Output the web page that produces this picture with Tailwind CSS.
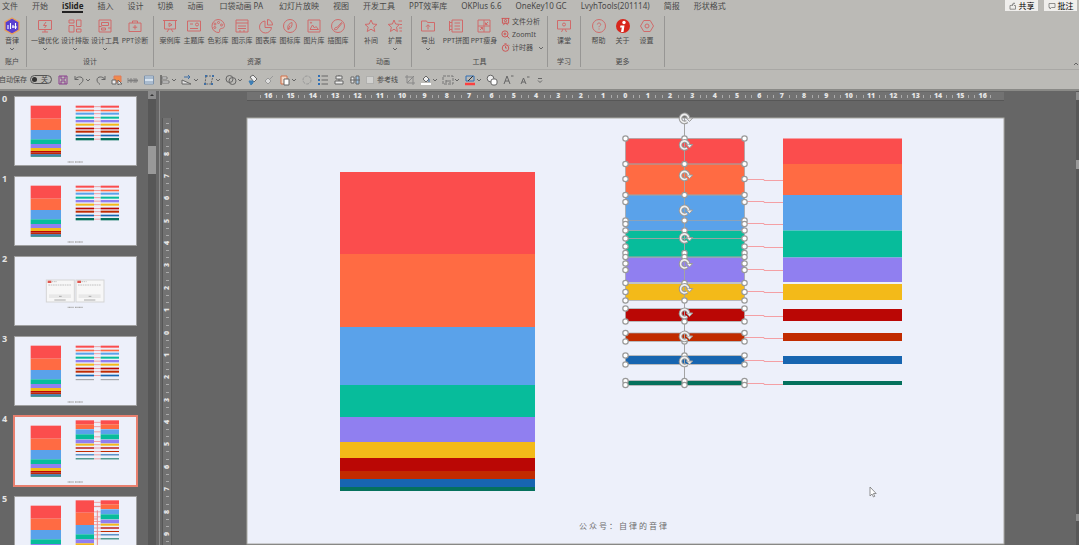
<!DOCTYPE html>
<html lang="zh-CN">
<head>
    <meta charset="UTF-8" />
    <meta name="viewport" content="width=device-width, initial-scale=1.0" />
    <title>iSlide - PowerPoint</title>
    <script src="https://cdn.jsdelivr.net/npm/@tailwindcss/browser@4"></script>
</head>
<body class="h-screen overflow-hidden flex flex-col bg-[#666666] text-[#484848] font-['Noto_Sans','Noto_Sans_CJK_SC',sans-serif]">

    <!-- Icon sprite -->
    <svg class="hidden">
        <defs>
            <symbol id="i-optimize" viewBox="0 0 16 16"><path d="M1.5 2.5h13v9h-13zM5 14h6M8 11.5V14"/><path d="M9 4 6.500 7.500h3L7.500 10" fill="none"/></symbol>
            <symbol id="i-layout" viewBox="0 0 16 16"><path d="M2 2h5v3H2zM2 7.500h5V14H2zM9.500 2H14v6.500H9.500zM9.500 11H14v3H9.500z"/></symbol>
            <symbol id="i-design" viewBox="0 0 16 16"><path d="M2 2h12v12H2zM4.500 4.500h7v3h-7zM4.500 10h4v2h-4zM2 8.500h2.500M11 10h3"/></symbol>
            <symbol id="i-diagnose" viewBox="0 0 16 16"><path d="M2 5h12v8.500H2zM5.500 5V3h5v2M8 7v4.500M5.800 9.200h4.400"/></symbol>
            <symbol id="i-case" viewBox="0 0 16 16"><path d="M1 2.500h14M2.500 2.500v8.500h11V2.500M5 14l2-3M11 14l-2-3M7 5v3.500l3-1.700z"/></symbol>
            <symbol id="i-theme" viewBox="0 0 16 16"><path d="M1.500 3h13v10h-13zM4 6h3M4 10.500h8"/><circle cx="11" cy="6.500" r="1.500"/></symbol>
            <symbol id="i-color" viewBox="0 0 16 16"><path d="M8 1.500a6.500 6.500 0 1 0 1 13c1.500-.5 0-2.500 1-3.500 1-1 4.500 0 4.500-3.500A6.500 6.500 0 0 0 8 1.500z"/><circle cx="5" cy="6" r="1"/><circle cx="8.500" cy="4.500" r="1"/><circle cx="11.500" cy="7" r="1"/><circle cx="4.800" cy="9.500" r="1"/></symbol>
            <symbol id="i-diagram" viewBox="0 0 16 16"><path d="M2 2h12v12H2zM2 5h12M4 8h8M4 10.500h8M6 14v-2M10 14v-2"/></symbol>
            <symbol id="i-chart" viewBox="0 0 16 16"><path d="M7 3a6 6 0 1 0 6.500 6.500H7z"/><path d="M9.500 1.500v5.500h5a5.500 5.500 0 0 0-5-5.500z"/></symbol>
            <symbol id="i-iconlib" viewBox="0 0 16 16"><circle cx="8" cy="8" r="6.500"/><path d="M6 11.500c-1-3 .5-6 4-7 .5 3.500-1 6-4 7zM6 11.500l2-4"/></symbol>
            <symbol id="i-picture" viewBox="0 0 16 16"><path d="M2 2h12v12H2zM4 11.500 6.500 7l2 3 1.500-1.500 2.500 3z"/><circle cx="5" cy="4.700" r=".6"/></symbol>
            <symbol id="i-vector" viewBox="0 0 16 16"><circle cx="8" cy="8" r="6.500"/><path d="M4.500 11.500c0-2 1.500-2.500 2.500-2l4.500-5 .5.800-4.300 5c0 1-1.500 1.700-3.200 1.200z"/></symbol>
            <symbol id="i-star" viewBox="0 0 16 16"><path d="m8 2 1.800 4 4.200.4-3.200 2.800 1 4.300L8 11.200l-3.800 2.300 1-4.300L2 6.400 6.200 6z"/></symbol>
            <symbol id="i-extend" viewBox="0 0 16 16"><path d="m7 2 1.600 4 3.900.4-3 2.800.9 4.300L7 11.200l-3.600 2.300 1-4.300-3.200-2.800L5.400 6zM11.500 3h3.500M13 6.500h2M12 10h3M12.500 13H15"/></symbol>
            <symbol id="i-export" viewBox="0 0 16 16"><path d="M1.500 3h5l1 1.500h7V13h-13zM8 11.500V7M6 8.800 8 6.700l2 2.100"/></symbol>
            <symbol id="i-stitch" viewBox="0 0 16 16"><path d="M4 2h10.500v12H4zM1.500 4.500H4M1.500 8H4M1.500 11.500H4M1.500 3v10M6.500 5h5.500M6.500 8h5.500M6.500 11h5.500"/></symbol>
            <symbol id="i-slim" viewBox="0 0 16 16"><path d="M2 2h12v12H2zM8 2v12M2 8h12M12 4 9.500 6.500V4.500M9.500 6.500h2M4 12l2.500-2.500v2M6.500 9.500h-2"/></symbol>
            <symbol id="i-analyze" viewBox="0 0 16 16"><path d="M1 2.500h14M2.500 2.500v8.500h11V2.500M4 14.500l3-3.500M12 14.500 9 11"/><circle cx="8" cy="6.500" r="2"/></symbol>
            <symbol id="i-zoomit" viewBox="0 0 16 16"><circle cx="7" cy="7" r="5.500"/><path d="m11 11 4 4M7 4.500v5M4.500 7h5"/></symbol>
            <symbol id="i-timer" viewBox="0 0 16 16"><circle cx="8" cy="9" r="5.800"/><path d="M6 1.500h4M8 5.500V9h2.500M13 3l1.500 1.500"/></symbol>
            <symbol id="i-class" viewBox="0 0 16 16"><path d="M1.500 2.500h13V11h-13zM5.500 14 7 11M10.500 14 9 11"/><circle cx="8" cy="6.500" r="1.500"/></symbol>
            <symbol id="i-help" viewBox="0 0 16 16"><circle cx="8" cy="8" r="6.500"/><path d="M6.300 6.500C6.300 4.500 9.700 4.500 9.700 6.500 9.700 7.700 8 7.700 8 9.200M8 10.500v1"/></symbol>
            <symbol id="i-setting" viewBox="0 0 16 16"><path d="M4.800 2.500h6.400L14.500 8l-3.300 5.500H4.800L1.500 8z"/><circle cx="8" cy="8" r="2"/></symbol>
            <symbol id="i-chev" viewBox="0 0 6 6"><path d="m1 2 2 2 2-2" fill="none" stroke="#666" stroke-width="1"/></symbol>
        </defs>
    </svg>

    <!-- Ribbon -->
    <header class="shrink-0 bg-[#bbbab6] border-b-2 border-[#8a8a87]">
        <div class="flex items-start justify-between h-[15px]">
            <nav class="flex gap-[14px] pl-[2px] text-[8px] leading-[11px] whitespace-nowrap">
                <a href="#">文件</a>
                <a href="#">开始</a>
                <a href="#" class="font-bold text-[#222] border-b-2 border-[#222]">iSlide</a>
                <a href="#">插入</a>
                <a href="#">设计</a>
                <a href="#">切换</a>
                <a href="#">动画</a>
                <a href="#" class="px-[2px]">口袋动画 PA</a>
                <a href="#">幻灯片放映</a>
                <a href="#">视图</a>
                <a href="#">开发工具</a>
                <a href="#">PPT效率库</a>
                <a href="#">OKPlus 6.6</a>
                <a href="#">OneKey10 GC</a>
                <a href="#">LvyhTools(201114)</a>
                <a href="#">简报</a>
                <a href="#">形状格式</a>
            </nav>
            <div class="flex gap-[6px] pr-[2px] text-[8px] leading-[11px] text-black">
                <button class="flex items-center justify-center gap-[2px] w-[33px] h-[11px] bg-[#efeeec]">
                    <svg class="size-[8px]" viewBox="0 0 8 8" fill="none" stroke="#777" stroke-width=".8"><path d="M2.500 3.500H1v3.700h5.500V3.500H5M2.500 3.500l2.500-3M3.500 4c0-2 1-2.500 2.500-2.500"/></svg>共享
                </button>
                <button class="flex items-center justify-center gap-[2px] w-[33px] h-[11px] bg-[#efeeec]">
                    <svg class="size-[8px]" viewBox="0 0 8 8" fill="none" stroke="#777" stroke-width=".8"><path d="M1 1.500h6v4H3.500L2 7V5.500H1z"/></svg>批注
                </button>
            </div>
        </div>

        <div class="relative flex h-[55px] pt-[1px] pb-[2px] border-b border-[#a9a8a5] text-[7px] leading-[10px] whitespace-nowrap" id="ribbon">
            <button class="absolute right-0 bottom-[2px]" aria-label="折叠功能区"><svg class="size-[6px] rotate-180"><use href="#i-chev"/></svg></button>
        </div>

        <!-- Quick access toolbar -->
        <div class="flex items-center h-[19px] text-[7px] leading-[10px] whitespace-nowrap">
            <label for="autosave" class="w-[28px] -ml-px">自动保存</label>
            <div class="relative w-[28px] pl-[3px]">
                <input id="autosave" type="checkbox" class="block appearance-none w-[22px] h-[9px] rounded-full border border-[#555]" />
                <span class="absolute left-[5px] top-[2px] size-[5px] rounded-full bg-[#333]"></span>
                <span class="absolute left-[14px] top-0 leading-[9px]">关</span>
            </div>
            <div class="flex" id="qat-a"></div>
            <label class="flex items-center gap-[3px] w-[39px] pl-[3px]"><input type="checkbox" class="appearance-none size-[8px] bg-[#d2d2d0] border border-[#b0b0ae]" />参考线</label>
            <div class="flex" id="qat-b"></div>
        </div>
    </header>

    <main class="flex flex-1 min-h-0">
        <!-- Slide list -->
        <aside class="flex w-[160px] shrink-0 border-r border-[#8c8c8c]">
            <ol class="flex-1 pl-[2px] pt-[6px] overflow-hidden" id="thumbs"></ol>
            <div class="w-[8px] mr-[3px] bg-[#575757]">
                <button class="block w-[8px] h-[8px] bg-[#8d8d8d]" aria-label="向上滚动"><svg class="size-[8px]" viewBox="0 0 8 8"><path d="M2 5h4L4 3z" fill="#333"/></svg></button>
                <div class="mt-[47px] h-[28px] bg-[#999999]"></div>
            </div>
        </aside>

        <div class="w-[10px] ml-[2px] mt-[27px] bg-[#727272] border-x border-[#575757] flex flex-col pt-[2px] text-[7px] font-bold text-[#e4e4e4]" id="vruler"></div>

        <!-- Editing area -->
        <section class="flex-1 min-w-0 pl-[75px] pr-[72px]">
            <div class="flex mt-[1px] h-[9px] px-[10px] bg-[#727272] border-b border-[#575757] text-[7px] leading-[8px] font-bold text-[#e4e4e4]" id="hruler"></div>
            <svg id="slide" class="block w-full mt-[17px] overflow-visible" viewBox="247 118 757 426">
                <rect x="247" y="118" width="757" height="426" fill="#edf0fa" stroke="#a9a9a4" stroke-width="1"/>
                <g id="shapes"></g>
                <g id="connectors" fill="none" stroke="#f4a0a4" stroke-width="1"></g>
                <g id="selection" fill="none" stroke="#a3a3a3"></g>
                <text x="579" y="529" class="text-[8px] tracking-[2px]" fill="#6c6c6c">公众号：自律的音律</text>
                <path d="M870 487v9l2-2 1.500 3 1.300-.7-1.400-2.800h2.800z" fill="#fff" stroke="#777" stroke-width=".8"/>
            </svg>
        </section>

        <div class="w-[3px] bg-[#575757] pt-[1px]">
            <div class="h-[8px] bg-[#8d8d8d]"></div>
            <div class="mt-[60px] h-[9px] bg-[#999999]"></div>
            <div class="mt-[345px] h-[7px] bg-[#8d8d8d]"></div>
        </div>
    </main>

    <script>
        const $ = id => document.getElementById(id);
        const colors = ['#fb4d4d', '#ff6b43', '#5aa2ea', '#07bc9b', '#907ff0', '#f3ba19', '#ba0705', '#c12b00', '#1765b0', '#05715c'];
        const chev = '<svg class="size-[6px]"><use href="#i-chev"/></svg>';

        // Ribbon groups: [name, group classes, item width, items [label, icon, has menu]]
        const logo = '<svg class="size-[18px] -my-px" viewBox="0 0 18 18"><path d="m9 1 7 4v8l-7 4-7-4V5z" fill="#5a3fd0" stroke="#e8a05a" stroke-width="1.300"/><path d="M5 8v4M7.500 6v6M10 8v3M12.500 6v6M9 10h5" stroke="#fff" stroke-width="1.100"/></svg>';
        const about = '<svg class="size-[16px]" viewBox="0 0 16 16"><circle cx="8" cy="8" r="7" fill="#d8261c"/><circle cx="9" cy="4.500" r="1.700" fill="#fff"/><path d="M5.500 7.500h4L8.500 14H6l.8-4.500H5z" fill="#fff"/></svg>';
        const groups = [
            ['账户', 'w-[29px] -ml-[2px]', 'w-[26px]', [['音律', logo, 1]]],
            ['设计', 'w-[127px]', 'w-[30px]', [['一键优化', 'optimize', 1], ['设计排版', 'layout', 1], ['设计工具', 'design', 1], ['PPT诊断', 'diagnose']]],
            ['资源', 'w-[201px]', 'w-[24px]', [['案例库', 'case'], ['主题库', 'theme'], ['色彩库', 'color'], ['图示库', 'diagram'], ['图表库', 'chart'], ['图标库', 'iconlib'], ['图片库', 'picture'], ['插图库', 'vector']]],
            ['动画', 'w-[57px]', 'w-[24px]', [['补间', 'star'], ['扩展', 'extend', 1]]],
            ['工具', 'w-[136px]', 'w-[28px]', [['导出', 'export', 1], ['PPT拼图', 'stitch'], ['PPT瘦身', 'slim']]],
            ['学习', 'w-[33px]', 'w-[24px]', [['课堂', 'class']]],
            ['更多', 'w-[84px]', 'w-[24px]', [['帮助', 'help'], ['关于', about], ['设置', 'setting']]]
        ];
        const icon = n => n[0] === '<' ? n : `<svg class="size-[16px]" fill="none" stroke="#d06a6a" stroke-width="1"><use href="#i-${n}"/></svg>`;
        const tools = [['文件分析', 'analyze', ''], ['ZoomIt', 'zoomit', ''], ['计时器', 'timer', chev]].map(t =>
            `<button class="flex items-center gap-[2px] h-[13px]"><svg class="size-[9px]" fill="none" stroke="#d04848" stroke-width="1.500"><use href="#i-${t[1]}"/></svg>${t[0]}<span class="pl-[3px]">${t[2]}</span></button>`).join('');
        $('ribbon').insertAdjacentHTML('afterbegin', groups.map(([name, cls, w, items]) => `
            <div class="${cls} shrink-0 flex flex-col justify-between border-r border-[#979694]">
                <div class="flex justify-center pt-[2px]">
                    ${items.map(([label, ic, menu]) => `<button class="${w} flex flex-col items-center">${icon(ic)}<span class="mt-[2px]">${label}</span>${menu ? chev : ''}</button>`).join('')}
                    ${name === '工具' ? `<div class="w-[44px] ml-[3px] -mt-[3px]">${tools}</div>` : ''}
                </div>
                <div class="-mt-[4px] text-center">${name}</div>
            </div>`).join(''));

        // Quick access icons: [label, drawing, has menu]
        const qatA = [
            ['保存', '<path d="M2 2h8v8H2z" stroke="#8a3f8e"/><path d="M4 2v3h4V2M4 10V7h4v3" stroke="#8a3f8e"/>'],
            ['撤销', '<path d="M2 2v3.500h3.500M2 5.500C4 2 10 2 10 6c0 2-2 3-4 5"/>', 1],
            ['恢复', '<path d="M10 2v3.500H6.500M10 5.500C8 2 2 2 2 6c0 2 1.500 3 3 4.500"/>'],
            ['选择', '<path d="M3 2h7v6H3z" fill="#f08a4a" stroke="#e07a5a"/><path d="M1 6h4v4H1z" fill="#eee"/><path d="m7 6 4 4H8l-1 1z" fill="#fff"/>'],
            ['对齐', '<path d="M1 4v5M3 5h2v3H3zM7 4v5M8 5h2v3H8zM1 6.500h10" stroke="#777" stroke-width=".8"/>'],
            ['等宽', '<path d="M1.500 2h9v8h-9z" fill="#d7e3ef" stroke="#7d93ad"/><path d="M1.500 4h9M1.500 8h9" stroke="#7d93ad"/>'],
            ['左对齐', '<path d="M2 1v10" stroke="#333"/><path d="M3 3h5v2H3zM3 7h7v2H3z" fill="#e4e4e4" stroke-width=".8"/>', 1],
            ['旋转', '<path d="M1 10h9L1 6z" fill="#e4e4e4"/><path d="M3 3h6M7 1l2 2-2 2" stroke="#3f6fa5"/>', 1],
            ['编辑顶点', '<path d="M3 2h7L8 10H2z" stroke-dasharray="2 1"/><path d="M2 1h2v2H2zM9 1h2v2H9zM1 9h2v2H1zM8 9h2v2H8z" fill="#3f6fa5" stroke="none"/>', 1],
            ['合并形状', '<circle cx="4.500" cy="5" r="3.500"/><circle cx="7.500" cy="7" r="3.500"/>', 1],
            ['取色', '<path d="m3 3 3-2 4 4-3 3z" fill="#eee"/><path d="M2 7h4v2l-2 2z" fill="#3f7fb5" stroke="#3f7fb5"/>'],
            ['格式刷', '<path d="m2 7 3-3 3 3-3 3zM7 5l3-3" stroke="#999" fill="#ddd"/>'],
            ['粘贴', '<path d="M2 2h6v8H2z" fill="#f0d8c8" stroke="#d0704a"/><path d="M5 5h5v6H5z" fill="#fff"/>', 1],
            ['圆', '<circle cx="6" cy="6" r="4" stroke="#999" stroke-dasharray="3 1"/>'],
            ['项目符号', '<path d="M4.500 2H11M4.500 6H11M4.500 10H11"/><path d="M1 1h2v2H1zM1 5h2v2H1zM1 9h2v2H1z" fill="#2f6fb5" stroke="none"/>'],
            ['水平居中', '<path d="M3 2h6v3H3zM2 7h8v3H2zM6 1v1M6 5v2" fill="#eee"/>'],
            ['垂直居中', '<path d="M2 3h3v6H2z" fill="#eee"/><path d="M7 2h3v8H7z" fill="#9cc3e6"/><path d="M1 6h10"/>']
        ];
        const qatB = [
            ['裁剪', '<path d="M3 1v8h8M1 3h8v8M3 9l7-7" stroke="#888"/>'],
            ['填充', '<path d="m3 5 3-3 3 3-3 3z" fill="#eee"/><path d="M9 5v3" stroke="#3f6fa5"/><path d="M1 10h10" stroke="#fff" stroke-width="2"/>', 1],
            ['文本框', '<path d="M1 2h10v8H1zM4 9V5M8 9V5M4 7h4" stroke-dasharray="3 1" stroke="#777"/>', 1],
            ['轮廓', '<path d="M2 2h8v5H2z" stroke="#2f6fb5"/><path d="m4 7 5-5" stroke="#333"/><path d="M1 10h10" stroke="#fb4040" stroke-width="2.500"/>', 1],
            ['叠放', '<circle cx="4.500" cy="4.500" r="3.300" fill="#eee"/><rect x="5" y="5" width="6" height="6" rx="2" fill="#fff"/>'],
            ['增大字号', '<path d="M2 10 5 2l3 8M3 7h4M9 2h2.500"/>'],
            ['减小字号', '<path d="m3 10 2.500-6L8 10M4 8h3M9 3h2.500"/>'],
            ['自定义', '<path d="M4 4.500h4M4 6.500l2 2 2-2"/>']
        ];
        const qat = list => list.map(([label, d, menu]) =>
            `<button aria-label="${label}" class="${menu ? 'w-[22px]' : 'w-[16px]'} flex items-center pl-[2px]"><svg class="size-[12px]" viewBox="0 0 12 12" fill="none" stroke="#666" stroke-width="1">${d}</svg>${menu ? chev : ''}</button>`).join('');
        $('qat-a').innerHTML = qat(qatA);
        $('qat-b').innerHTML = qat(qatB);

        // Rulers
        for (let i = -16; i <= 16; i++) {
            $('hruler').innerHTML += `<span class="flex-1 flex items-center justify-center gap-[3px]"><i class="w-px h-[3px] bg-[#aaaaaa]"></i><b class="w-[9px] text-center">${Math.abs(i)}</b><i class="w-px h-[3px] bg-[#aaaaaa]"></i></span>`;
        }
        for (let i = -9; i <= 9; i++) {
            $('vruler').innerHTML += `<span class="flex-1 flex flex-col items-center justify-center gap-[2px]"><i class="h-px w-[3px] bg-[#aaaaaa]"></i><b class="-rotate-90 w-[10px] text-center leading-[10px]">${Math.abs(i)}</b><i class="h-px w-[3px] bg-[#aaaaaa]"></i></span>`;
        }

        const bar = (x, w, y1, y2, c) => `<rect x="${x}" y="${y1}" width="${w}" height="${y2 - y1}" fill="${c}"/>`;
        const bars = (x, w, list) => list.map(([a, b], i) => bar(x, w, a, b, colors[i])).join('');
        const stack = ys => ys.slice(1).map((y, i) => [ys[i], y]);

        // Thumbnails
        const left = stack([26, 65, 99, 127, 141, 153, 162, 167, 172, 176, 179]);
        const even = [[26, 32], [38, 43], [47, 53], [59, 65], [69, 76], [80, 86], [92, 97], [101, 107], [113, 118], [123, 130]];
        const thin = even.slice(0, 9);
        const packed = [[10, 22], [22, 36], [37, 52], [52, 67], [68, 79], [80, 86], [91, 95], [102, 105], [112, 115], [124, 127]];
        const tall = stack([10, 47, 84, 112, 127, 139, 149, 157, 162, 167, 171]);
        const foot = '<path d="M158 195h18M180 195h24" stroke="#aaa" stroke-width="4" stroke-dasharray="3 1"/>';
        const links = list => `<g stroke="#f0a0a4" stroke-width="3">${list.map(([a, b]) => `<path d="M237 ${(a + b) / 2}h20"/>`).join('')}</g>`;
        const pair = (m, r) => bars(47, 91, left) + links(r) + bars(182, 55, m) + bars(257, 55, r) + foot;
        const line = '<path d="M182 128h55M257 128h55" stroke="#999" stroke-width="3"/>';
        const dialog = x => `<rect x="${x}" y="69" width="84" height="66" fill="#f7f7f7" stroke="#d5d5d5" stroke-width="3"/><rect x="${x + 4}" y="71" width="11" height="7" fill="#e0564e"/><path d="M${x + 16} 74h16M${x + 6} 84h70" stroke="#aaa" stroke-width="2" stroke-dasharray="5 2"/><rect x="${x + 8}" y="112" width="66" height="11" fill="#e8e8e8"/><path d="M${x + 38} 118h8M${x + 24} 129h34" stroke="#aaa" stroke-width="3"/>`;
        const pages = [
            pair(even, even),
            pair(even, even),
            dialog(94) + dialog(183) + '<path d="M158 151h18M180 151h24" stroke="#aaa" stroke-width="4" stroke-dasharray="3 1"/>',
            pair(thin, thin) + line,
            pair(packed, packed),
            pair(tall, packed) + '<path d="M247 40v160M237 28h20M237 66h10" stroke="#e88" stroke-width="3" fill="none"/>'
        ];
        $('thumbs').innerHTML = pages.map((p, i) => `
            <li class="flex gap-[2px] h-[80px]">
                <span class="w-[11px] -mt-[4px] text-[9px] leading-[12px] font-bold text-[#e4e4e4]">${i}</span>
                <svg class="w-[121px] h-[68px] ${i === 4 ? 'outline-2 outline-[#e8806f]' : 'outline-1 outline-[#a0a0a0]'}" viewBox="0 0 363 204"><rect width="363" height="204" fill="#edf0fa"/>${p}</svg>
            </li>`).join('');

        // Slide
        const blocks = [[138.5, 164], [164, 195], [195, 230.5], [230.5, 257.5], [257.5, 282], [284, 300], [309, 321], [333, 341], [356, 364], [381, 385]];
        $('shapes').innerHTML = bars(340, 195, stack([172, 254, 327, 385, 417, 442, 458, 471, 479, 487, 491]))
            + bars(625.5, 119, blocks) + bars(783, 119, blocks);
        $('connectors').innerHTML = [179.5, 201.5, 223.5, 246.5, 269.5, 291.5, 315.5, 337.5, 360.5, 383.5].map(y => `<path d="M745 ${y}h19v1h19"/>`).join('');

        const knob = (x, y) => `<circle cx="${x}" cy="${y}" r="2.700" fill="#fff" stroke="#999" stroke-width="1.200"/>`;
        // rotation handle: grey outline under a white circular arrow
        const turn = y => `<g transform="translate(684.500 ${y})"><path d="M2.600 3A4 4 0 1 1 4-.5" stroke="#999" stroke-width="3.600"/><path d="M1.800-.5h6.400L5 3z" fill="#eee" stroke="#999" stroke-width="1"/><path d="M2.600 3A4 4 0 1 1 4-.5" stroke="#f0f0f0" stroke-width="1.600"/></g>`;
        const sideY = [138.5, 164, 179, 195, 202, 220.5, 224, 230.5, 238.5, 246.5, 253, 257, 263.5, 270, 283, 292, 300.5, 308.5, 321.5, 333, 341.5, 355.5, 364.5, 381, 385];
        const midY = [138.5, 164, 195, 220.5, 230.5, 253, 257, 283, 300.5, 321.5, 341.5, 355.5, 381, 385];
        $('selection').innerHTML = '<path d="M684.500 118v267"/>'
            + [[138.5, 164], [164, 195], [195, 220.5], [230.5, 238.500], [238.500, 257], [257, 283], [283, 300.5], [308.5, 321.5], [333, 341.5], [355.5, 364.5], [380.5, 385.5]].map(([a, b]) => `<rect x="625.500" y="${a}" width="119" height="${b - a}" stroke-opacity=".7"/>`).join('')
            + sideY.map(y => knob(625.5, y) + knob(744.5, y)).join('')
            + midY.map(y => knob(684.5, y)).join('')
            + [118.5, 145, 175.5, 210.5, 238, 264, 289, 313.5, 336.5, 361.5].map(turn).join('');
    </script>
</body>
</html>
